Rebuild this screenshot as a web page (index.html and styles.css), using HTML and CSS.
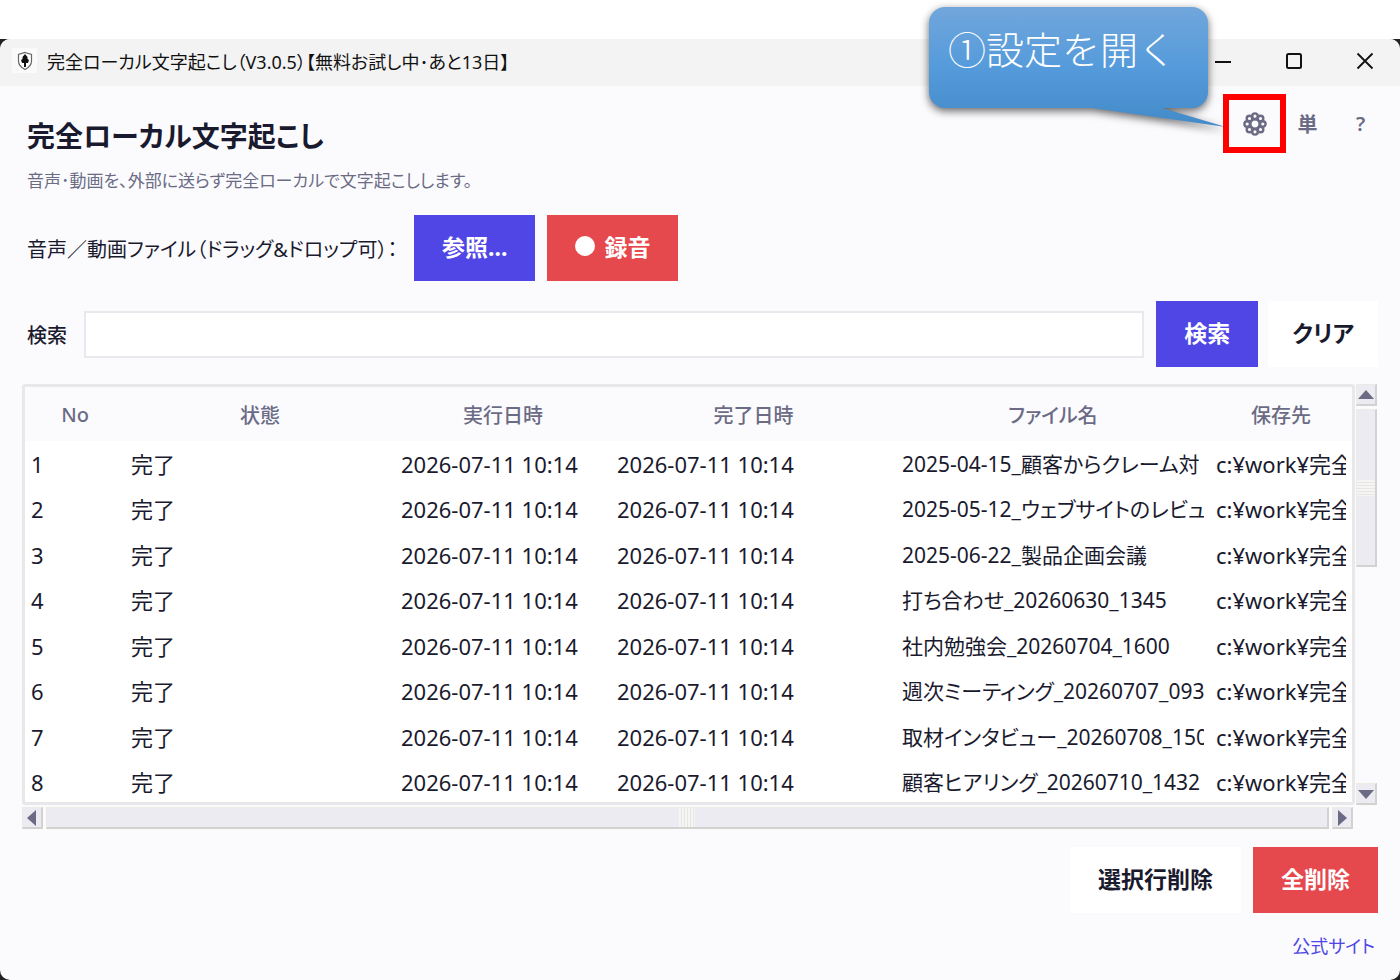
FILE: index.html
```
<!DOCTYPE html>
<html lang="ja">
<head>
    <meta charset="UTF-8">
    <meta name="viewport" content="width=device-width, initial-scale=1.0">
    <title>完全ローカル文字起こし</title>
    <link rel="stylesheet" href="styles.css">
</head>
<body>
    <div class="desktop">
        <div class="window">
            <div class="titlebar">
                <span class="app-icon">
                    <svg width="18" height="20" viewBox="0 0 18 20">
                        <path d="M9 1.500 L15.500 3.500 V10 C15.500 14 13 16.500 9 18.500 C5 16.500 2.500 14 2.500 10 V3.500 Z" fill="#fff" stroke="#666" stroke-width="1.200"/>
                        <path d="M9 3 L11.500 6 V8 L13 9 L12 12 H10 V16 H8 V12 H6 L5 9 L6.500 8 V6 Z" fill="#111"/>
                    </svg>
                </span>
                <span class="titlebar-text">完全ローカル文字起こし（V3.0.5）【無料お試し中･あと13日】</span>
                <div class="window-buttons">
                    <button type="button" aria-label="最小化">
                        <svg width="18" height="18" viewBox="0 0 18 18"><path d="M1 10 H17" stroke="#111" stroke-width="2"/></svg>
                    </button>
                    <button type="button" aria-label="最大化">
                        <svg width="18" height="18" viewBox="0 0 18 18"><rect x="2" y="2" width="14" height="14" rx="1.500" fill="none" stroke="#111" stroke-width="2"/></svg>
                    </button>
                    <button type="button" aria-label="閉じる">
                        <svg width="18" height="18" viewBox="0 0 18 18"><path d="M1.500 1.500 L16.500 16.500 M16.500 1.500 L1.500 16.500" stroke="#111" stroke-width="1.800"/></svg>
                    </button>
                </div>
            </div>

            <div class="content">
                <div class="header">
                    <div class="heading">
                        <h1>完全ローカル文字起こし</h1>
                        <p>音声･動画を、外部に送らず完全ローカルで文字起こしします。</p>
                    </div>
                    <div class="toolbar">
                        <div class="settings">
                            <button type="button" aria-label="設定">
                                <svg width="24" height="24" viewBox="0 0 24 24" fill="none" stroke="#6b6b85" stroke-width="2.400">
                                    <circle cx="12" cy="12" r="4.600"/>
                                    <circle cx="12" cy="4.200" r="2.800"/>
                                    <circle cx="17.500" cy="6.500" r="2.800"/>
                                    <circle cx="19.800" cy="12" r="2.800"/>
                                    <circle cx="17.500" cy="17.500" r="2.800"/>
                                    <circle cx="12" cy="19.800" r="2.800"/>
                                    <circle cx="6.500" cy="17.500" r="2.800"/>
                                    <circle cx="4.200" cy="12" r="2.800"/>
                                    <circle cx="6.500" cy="6.500" r="2.800"/>
                                </svg>
                            </button>
                            <div class="callout">
                                <svg class="callout-shape" width="320" height="150" viewBox="0 0 320 150">
                                    <defs>
                                        <linearGradient id="calloutFill" x1="0" y1="0" x2="0" y2="1">
                                            <stop offset="0" stop-color="#71a6db"/>
                                            <stop offset="0.5" stop-color="#559bdb"/>
                                            <stop offset="1" stop-color="#438ac9"/>
                                        </linearGradient>
                                    </defs>
                                    <path d="M16 0 H263 A16 16 0 0 1 279 16 V85 A16 16 0 0 1 263 101 H233 L297 120 L163 101 H16 A16 16 0 0 1 0 85 V16 A16 16 0 0 1 16 0 Z" fill="url(#calloutFill)"/>
                                </svg>
                                <span class="callout-text">①設定を開く</span>
                            </div>
                            <div class="highlight"></div>
                        </div>
                        <button type="button">単</button>
                        <button type="button">?</button>
                    </div>
                </div>

                <div class="file-row">
                    <span class="file-label">音声／動画ファイル（ドラッグ&amp;ドロップ可）：</span>
                    <button type="button" class="btn primary">参照...</button>
                    <button type="button" class="btn danger"><span class="dot"></span>録音</button>
                </div>

                <div class="search-row">
                    <label for="search">検索</label>
                    <input type="text" id="search" name="search">
                    <button type="button" class="btn primary">検索</button>
                    <button type="button" class="btn plain clear">クリア</button>
                </div>

                <div class="list">
                    <div class="table-frame">
                        <table>
                            <colgroup>
                                <col class="col-no">
                                <col class="col-state">
                                <col class="col-start">
                                <col class="col-end">
                                <col class="col-file">
                                <col class="col-path">
                            </colgroup>
                            <thead>
                                <tr><th>No</th><th>状態</th><th>実行日時</th><th>完了日時</th><th>ファイル名</th><th>保存先</th></tr>
                            </thead>
                            <tbody>
                                <tr><td>1</td><td>完了</td><td>2026-07-11 10:14</td><td>2026-07-11 10:14</td><td class="file"><span>2025-04-15_顧客からクレーム対</span></td><td><span>c:¥work¥完全</span></td></tr>
                                <tr><td>2</td><td>完了</td><td>2026-07-11 10:14</td><td>2026-07-11 10:14</td><td class="file"><span>2025-05-12_ウェブサイトのレビュー</span></td><td><span>c:¥work¥完全</span></td></tr>
                                <tr><td>3</td><td>完了</td><td>2026-07-11 10:14</td><td>2026-07-11 10:14</td><td class="file"><span>2025-06-22_製品企画会議</span></td><td><span>c:¥work¥完全</span></td></tr>
                                <tr><td>4</td><td>完了</td><td>2026-07-11 10:14</td><td>2026-07-11 10:14</td><td class="file"><span>打ち合わせ_20260630_1345</span></td><td><span>c:¥work¥完全</span></td></tr>
                                <tr><td>5</td><td>完了</td><td>2026-07-11 10:14</td><td>2026-07-11 10:14</td><td class="file"><span>社内勉強会_20260704_1600</span></td><td><span>c:¥work¥完全</span></td></tr>
                                <tr><td>6</td><td>完了</td><td>2026-07-11 10:14</td><td>2026-07-11 10:14</td><td class="file"><span>週次ミーティング_20260707_0930</span></td><td><span>c:¥work¥完全</span></td></tr>
                                <tr><td>7</td><td>完了</td><td>2026-07-11 10:14</td><td>2026-07-11 10:14</td><td class="file"><span>取材インタビュー_20260708_1500</span></td><td><span>c:¥work¥完全</span></td></tr>
                                <tr><td>8</td><td>完了</td><td>2026-07-11 10:14</td><td>2026-07-11 10:14</td><td class="file"><span>顧客ヒアリング_20260710_1432</span></td><td><span>c:¥work¥完全</span></td></tr>
                            </tbody>
                        </table>
                    </div>
                    <div class="scroll-v">
                        <button type="button" aria-label="上へ"><svg width="16" height="10" viewBox="0 0 16 10"><path d="M0 9 L8 0 L16 9 Z" fill="#6b6b85"/></svg></button>
                        <div class="thumb"><div class="grip"></div></div>
                        <button type="button" aria-label="下へ"><svg width="16" height="10" viewBox="0 0 16 10"><path d="M0 1 L8 10 L16 1 Z" fill="#6b6b85"/></svg></button>
                    </div>
                    <div class="scroll-h">
                        <button type="button" aria-label="左へ"><svg width="10" height="16" viewBox="0 0 10 16"><path d="M9 0 L0 8 L9 16 Z" fill="#6b6b85"/></svg></button>
                        <div class="thumb"><div class="grip"></div></div>
                        <button type="button" aria-label="右へ"><svg width="10" height="16" viewBox="0 0 10 16"><path d="M1 0 L10 8 L1 16 Z" fill="#6b6b85"/></svg></button>
                    </div>
                </div>

                <div class="actions">
                    <button type="button" class="btn plain">選択行削除</button>
                    <button type="button" class="btn danger">全削除</button>
                </div>
                <div class="footer">
                    <a href="#">公式サイト</a>
                </div>
            </div>
        </div>
    </div>
</body>
</html>
```
FILE: styles.css
```
* {
    box-sizing: border-box;
}

body {
    margin: 0;
    padding-top: 39px;
    height: 100vh;
    background: #fff;
    color: #1a1a2e;
    font-family: "Noto Sans", "Noto Sans CJK JP", sans-serif;
    font-feature-settings: "palt";
    overflow: hidden;
}

button,
input {
    font: inherit;
    font-feature-settings: inherit;
    color: inherit;
    border: none;
    padding: 0;
}

button {
    display: flex;
    align-items: center;
    justify-content: center;
    background: none;
    white-space: nowrap;
    cursor: pointer;
}

.desktop {
    height: 100%;
    background: #222;
}

.window {
    display: flex;
    flex-direction: column;
    height: 100%;
    background: #fbfbfe;
    border-radius: 10px;
}

/* title bar */
.titlebar {
    display: flex;
    align-items: center;
    height: 47px;
    padding: 0 0 4px 12px;
    background: #f3f3f3;
    border-radius: 10px 10px 0 0;
    color: #111;
    font-size: 18px;
}

.app-icon {
    display: flex;
    align-items: center;
    justify-content: center;
    width: 25px;
    height: 25px;
    margin-right: 10px;
    background: #fafafa;
}

.titlebar-text {
    flex: 1;
    white-space: nowrap;
}

.window-buttons {
    display: flex;
}

.window-buttons button {
    width: 71px;
    height: 43px;
}

/* main area */
.content {
    display: flex;
    flex-direction: column;
    flex: 1;
    min-height: 0;
    padding: 11px 22px 21px;
}

.header {
    display: flex;
    justify-content: space-between;
    margin-right: -9px;
    padding-left: 5px;
}

h1 {
    margin: 19px 0 12px;
    font-size: 28px;
    line-height: 40px;
    font-weight: bold;
}

.heading p {
    margin: 0;
    color: #6b6b85;
    font-size: 17px;
    line-height: 26px;
}

.toolbar {
    display: flex;
}

.toolbar button {
    width: 53px;
    height: 53px;
    color: #6b6b85;
    font-size: 20px;
    font-weight: 600;
}

.settings {
    position: relative;
    height: 53px;
}

.highlight {
    position: absolute;
    inset: -3px -5px;
    border: 6px solid #f00;
    pointer-events: none;
}

.callout {
    position: absolute;
    top: -90px;
    right: 73px;
    width: 279px;
    height: 101px;
    padding: 16px 19px;
}

.callout-shape {
    position: absolute;
    top: 0;
    left: 0;
    overflow: visible;
    filter: drop-shadow(0 3px 4px rgba(0, 0, 0, 0.6));
}

.callout-text {
    position: relative;
    color: #fff;
    font-family: "Noto Sans CJK JP", sans-serif;
    font-feature-settings: normal;
    font-size: 38px;
    font-weight: 300;
    line-height: 50px;
    white-space: nowrap;
}

.btn {
    height: 66px;
    padding: 0 28px 4px;
    font-size: 23px;
    font-weight: bold;
}

.primary {
    background: #4f46e5;
    color: #fff;
}

.danger {
    background: #e5484d;
    color: #fff;
}

.plain {
    background: #fff;
}

.clear {
    padding: 0 24px 4px;
}

.dot {
    width: 20px;
    height: 20px;
    margin-right: 9px;
    border-radius: 50%;
    background: #fff;
}

.file-row {
    display: flex;
    align-items: center;
    gap: 12px;
    margin-top: 21px;
    padding-left: 5px;
    font-size: 20px;
}

.file-label {
    min-width: 375px;
    white-space: nowrap;
}

.search-row {
    display: flex;
    align-items: center;
    margin: 20px 0 17px;
    padding-left: 5px;
    font-size: 20px;
}

.search-row label {
    margin-right: 17px;
    font-weight: 500;
}

.search-row input {
    flex: 1;
    height: 47px;
    margin-right: 12px;
    padding: 0 10px;
    background: #fff;
    border: 2px solid #e8e8ee;
}

.search-row .plain {
    margin-left: 10px;
}

/* history list */
.list {
    display: grid;
    grid-template-columns: 1fr 22px;
    grid-template-rows: 1fr 22px;
    gap: 2px 1px;
    flex: 1;
    min-height: 0;
}

.table-frame {
    background: #fff;
    border: 3px solid #e8e8ea;
    border-radius: 3px;
    overflow: hidden;
}

table {
    width: 100%;
    table-layout: fixed;
    border-collapse: collapse;
}

.col-no { width: 100px; }
.col-state { width: 270px; }
.col-start { width: 216px; }
.col-end { width: 285px; }
.col-path { width: 142px; }

th {
    height: 54px;
    padding: 0;
    background: #fbfbfe;
    color: #6b6b85;
    font-size: 20px;
    font-weight: 500;
}

td {
    height: 45px;
    padding: 0 6px;
    font-size: 22px;
    line-height: 32px;
    white-space: nowrap;
}

tr:nth-child(even) td {
    height: 46px;
}

td.file {
    font-size: 21px;
}

td span {
    display: block;
    overflow: hidden;
}

.scroll-v,
.scroll-h {
    display: flex;
    justify-content: space-between;
    gap: 3px;
}

.scroll-v {
    flex-direction: column;
    padding-right: 1px;
}

.scroll-h {
    padding-right: 2px;
}

.scroll-v button,
.scroll-h button {
    width: 21px;
    height: 22px;
}

.scroll-v button,
.scroll-h button,
.thumb {
    background: #ebebf1;
    border: 1px solid #eeebe7;
    border-right: 2px solid #d2d2d0;
    border-bottom: 2px solid #d2d2d0;
}

.thumb {
    display: flex;
    align-items: center;
    justify-content: center;
}

.scroll-v .thumb {
    height: 158px;
    margin-bottom: auto;
}

.scroll-h .thumb {
    flex: 1;
}

.scroll-v .grip {
    width: 100%;
    height: 16px;
    background: repeating-linear-gradient(#f7f5f2 0 2px, #e6e6ea 2px 3px);
}

.scroll-h .grip {
    width: 16px;
    height: 100%;
    background: repeating-linear-gradient(90deg, #f7f5f2 0 2px, #e6e6ea 2px 3px);
}

.actions {
    display: flex;
    justify-content: flex-end;
    gap: 12px;
    margin-top: 18px;
}

.footer {
    margin-top: 20px;
    padding-right: 3px;
    font-size: 18px;
    line-height: 26px;
    text-align: right;
}

.footer a {
    color: #4f46e5;
    text-decoration: none;
}
```
